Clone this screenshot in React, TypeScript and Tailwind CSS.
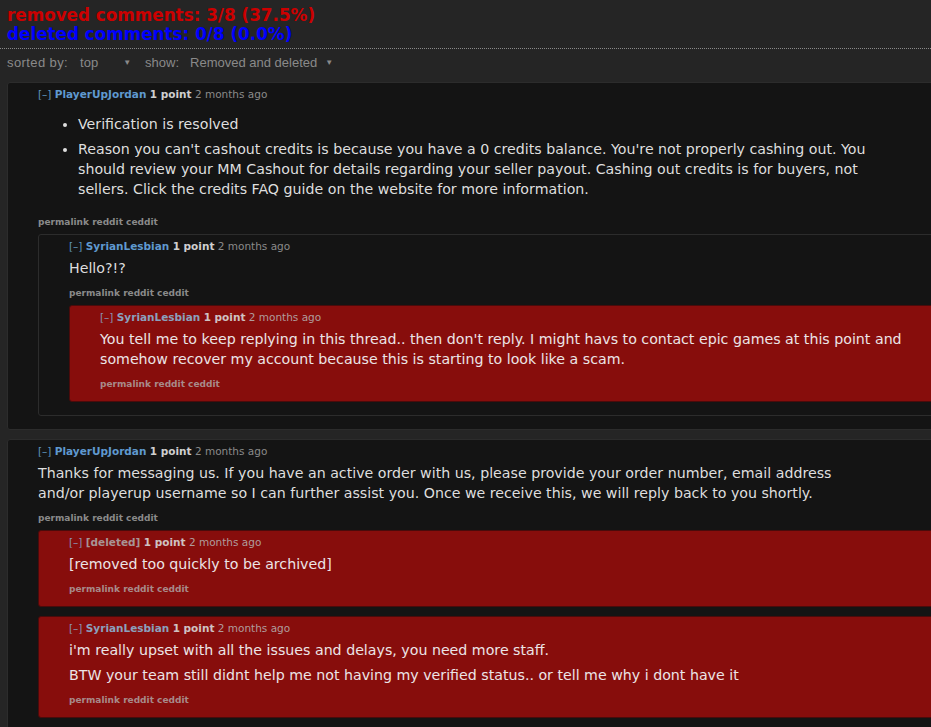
import React from "react";

type CProps = {
  author: string;
  red?: boolean;
  deletedAuthor?: boolean;
  children?: React.ReactNode;
  body: React.ReactNode;
};

function Comment({ author, red, deletedAuthor, body, children }: CProps) {
  const card = red
    ? "bg-[#870d0c] border-[#4a0b0b]"
    : "bg-[#141414] border-[#2c2c2c]";
  const expand = red ? "text-[#8c93b4]" : "text-[#5f95bd]";
  const name = deletedAuthor
    ? "text-[#a89494]"
    : red
    ? "text-[#8ba0bd]"
    : "text-[#5f99cf]";
  const score = red ? "text-[#cfc2c2]" : "text-[#cfcfcf]";
  const time = red ? "text-[#b09c9c]" : "text-[#8a8a8a]";
  const text = red ? "text-[#ece4e6]" : "text-[#dedede]";
  const perma = red ? "text-[#a88a8a]" : "text-[#8a8a8a]";
  return (
    <div className={`rounded-[3px] border pl-[30px] pt-[5px] pb-[5px] ${card}`}>
      <div className="text-[10.5px] leading-[13px] whitespace-nowrap">
        <span className={expand}>[–]</span>{" "}
        <span className={`font-bold ${name}`}>{author}</span>{" "}
        <span className={`font-bold ${score}`}>1 point</span>{" "}
        <span className={time}>2 months ago</span>
      </div>
      <div className={`pt-[5px] max-w-[836px] text-[14.2px] leading-[20px] ${text}`}>{body}</div>
      <div className={`mt-[9px] mb-[5px] text-[9px] leading-[13px] font-bold ${perma}`}>
        permalink reddit ceddit
      </div>
      {children ? <div className="flex flex-col gap-[9px] pb-[8px]">{children}</div> : null}
    </div>
  );
}

export default function App() {
  return (
    <div
      className="w-[931px] h-[727px] overflow-hidden bg-[#252525]"
      style={{ fontFamily: '"DejaVu Sans", Verdana, sans-serif' }}
    >
      <div className="w-[1200px]">
        <div className="pl-[7px] pt-[6px] text-[16.8px] leading-[19px] font-bold">
          <div className="text-[#cc0000]">removed comments: 3/8 (37.5%)</div>
          <div className="text-[#0000ff]">deleted comments: 0/8 (0.0%)</div>
        </div>
        <div className="mt-[4px] w-[931px] border-t border-dotted border-[#8a8a8a]" />
        <div
          className="mt-[5px] pl-[7px] flex items-center text-[13px] leading-[18px] text-[#8a8a8a]"
          style={{ fontFamily: '"Liberation Sans", Arial, sans-serif' }}
        >
          <span className="tracking-[0.4px]">sorted by:</span>
          <span className="ml-[9px] inline-flex w-[54px] items-center justify-between pl-[3px]">
            <span>top</span>
            <span className="text-[8px]">▼</span>
          </span>
          <span className="ml-[14px]">show:</span>
          <span className="ml-[8px] inline-flex items-center pl-[3px]">
            <span>Removed and deleted</span>
            <span className="ml-[8px] text-[8px]">▼</span>
          </span>
        </div>
        <div className="mt-[10px] ml-[7px] flex flex-col gap-[9px]">
          <Comment
            author="PlayerUpJordan"
            body={
              <ul className="list-disc pl-[40px] py-[8px] flex flex-col gap-[5px]">
                <li>Verification is resolved</li>
                <li>
                  Reason you can't cashout credits is because you have a 0 credits balance. You're not
                  properly cashing out. You should review your MM Cashout for details regarding your
                  seller payout. Cashing out credits is for buyers, not sellers. Click the credits FAQ
                  guide on the website for more information.
                </li>
              </ul>
            }
          >
            <Comment author="SyrianLesbian" body={<p>Hello?!?</p>}>
              <Comment
                author="SyrianLesbian"
                red
                body={
                  <p>
                    You tell me to keep replying in this thread.. then don't reply. I might havs to
                    contact epic games at this point and somehow recover my account because this is
                    starting to look like a scam.
                  </p>
                }
              />
            </Comment>
          </Comment>
          <Comment
            author="PlayerUpJordan"
            body={
              <p>
                Thanks for messaging us. If you have an active order with us, please provide your order
                number, email address and/or playerup username so I can further assist you. Once we
                receive this, we will reply back to you shortly.
              </p>
            }
          >
            <Comment
              author="[deleted]"
              deletedAuthor
              red
              body={<p>[removed too quickly to be archived]</p>}
            />
            <Comment
              author="SyrianLesbian"
              red
              body={
                <div className="flex flex-col gap-[5px]">
                  <p>i'm really upset with all the issues and delays, you need more staff.</p>
                  <p>
                    BTW your team still didnt help me not having my verified status.. or tell me why i
                    dont have it
                  </p>
                </div>
              }
            />
          </Comment>
        </div>
      </div>
    </div>
  );
}
